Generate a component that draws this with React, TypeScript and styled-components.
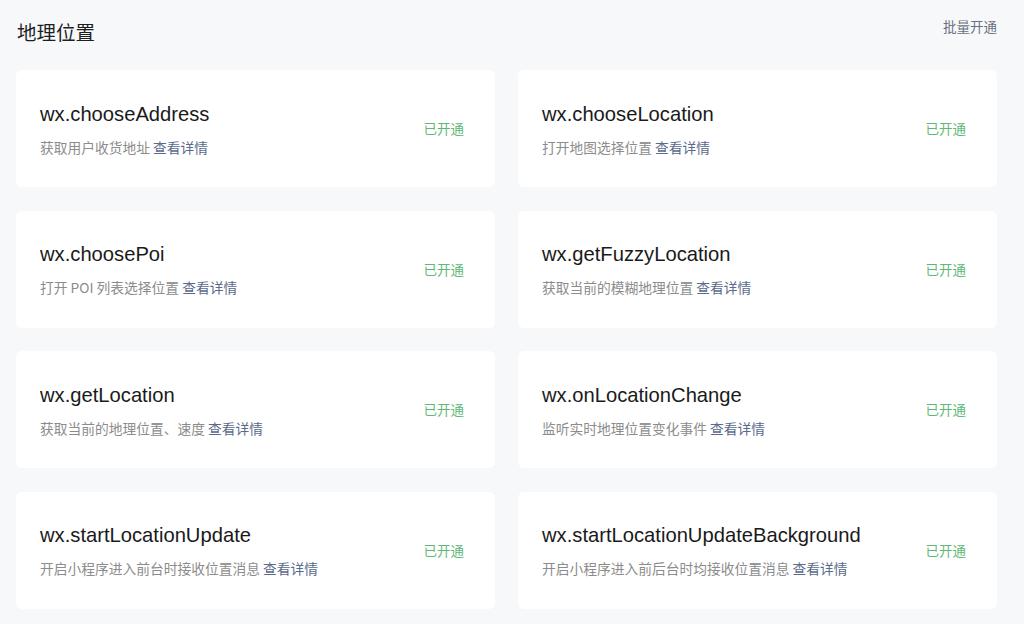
import * as React from 'react'
import styled, { createGlobalStyle } from 'styled-components'

type Api = {
  name: string
  desc: string
}

const apis: Api[] = [
  { name: 'wx.chooseAddress', desc: '获取用户收货地址' },
  { name: 'wx.chooseLocation', desc: '打开地图选择位置' },
  { name: 'wx.choosePoi', desc: '打开 POI 列表选择位置' },
  { name: 'wx.getFuzzyLocation', desc: '获取当前的模糊地理位置' },
  { name: 'wx.getLocation', desc: '获取当前的地理位置、速度' },
  { name: 'wx.onLocationChange', desc: '监听实时地理位置变化事件' },
  { name: 'wx.startLocationUpdate', desc: '开启小程序进入前台时接收位置消息' },
  { name: 'wx.startLocationUpdateBackground', desc: '开启小程序进入前后台时均接收位置消息' },
]

export default function App() {
  return (
    <>
      <GlobalStyle />
      <Page>
        <Header>
          <Title>地理位置</Title>
          <BatchLink>批量开通</BatchLink>
        </Header>
        <Grid>
          {apis.map(api => (
            <Card key={api.name}>
              <Info>
                <ApiName>{api.name}</ApiName>
                <Desc>
                  {api.desc} <DetailLink>查看详情</DetailLink>
                </Desc>
              </Info>
              <Status>已开通</Status>
            </Card>
          ))}
        </Grid>
      </Page>
    </>
  )
}

const GlobalStyle = createGlobalStyle`
  html, body {
    margin: 0;
    padding: 0;
    background: #f7f8fa;
  }
  body {
    font-family: "Liberation Sans", "Noto Sans CJK SC", sans-serif;
  }
`

const Page = styled.div`
  width: 1024px;
  height: 624px;
  box-sizing: border-box;
  padding: 0 27px 0 16px;
  background: #f7f8fa;
  overflow: hidden;
`

const Header = styled.div`
  display: flex;
  justify-content: space-between;
  align-items: flex-start;
  height: 70px;
`

const Title = styled.h1`
  margin: 19px 0 0 1px;
  font-size: 19.5px;
  line-height: 26px;
  font-weight: 400;
  color: #1f1f1f;
  font-family: "Noto Sans CJK SC", sans-serif;
`

const BatchLink = styled.a`
  margin-top: 16px;
  font-size: 13.5px;
  line-height: 20px;
  color: #6b7180;
  font-family: "Noto Sans CJK SC", sans-serif;
  cursor: pointer;
`

const Grid = styled.div`
  display: grid;
  grid-template-columns: 1fr 1fr;
  grid-auto-rows: 117px;
  column-gap: 23px;
  row-gap: 23.5px;
`

const Card = styled.div`
  display: flex;
  align-items: center;
  justify-content: space-between;
  background: #ffffff;
  border-radius: 6px;
  padding: 0 31px 0 24px;
`

const Info = styled.div`
  display: flex;
  flex-direction: column;
  gap: 11px;
  padding-top: 1px;
`

const ApiName = styled.div`
  font-size: 20.2px;
  line-height: 24px;
  color: #1a1a1a;
`

const Desc = styled.div`
  font-size: 13.75px;
  line-height: 20px;
  color: #8c8c8c;
  font-family: "Noto Sans CJK SC", sans-serif;
`

const DetailLink = styled.a`
  color: #5a6a8c;
  cursor: pointer;
`

const Status = styled.span`
  margin-bottom: 1px;
  font-size: 13.5px;
  line-height: 20px;
  color: #5fb878;
  font-family: "Noto Sans CJK SC", sans-serif;
`
